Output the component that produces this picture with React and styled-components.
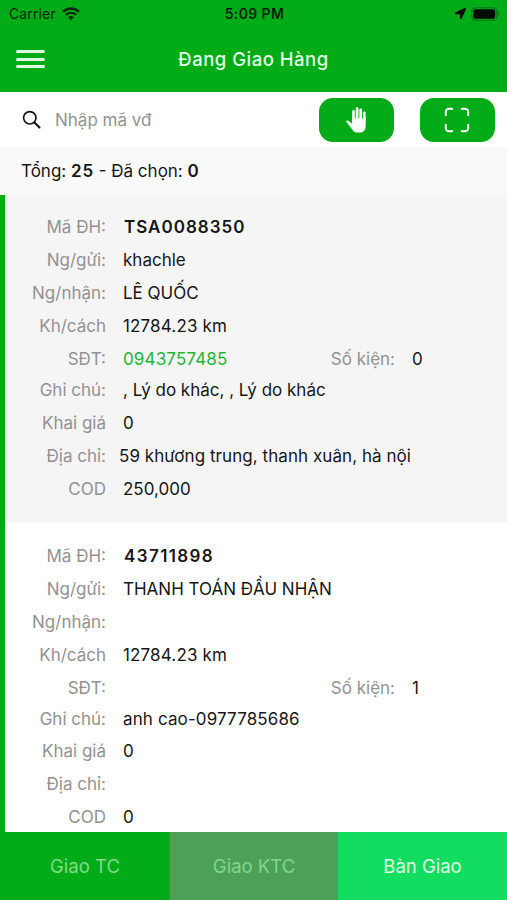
import React from 'react';
import styled, { createGlobalStyle } from 'styled-components';
import { IoScanOutline } from 'react-icons/io5';
import { FaLocationArrow } from 'react-icons/fa';

const green = '#00ab18';

const GlobalStyle = createGlobalStyle`
  * { box-sizing: border-box; }

  body {
    margin: 0;
    background: #fff;
    font-family: Inter, 'Noto Sans', sans-serif;
    color: #161616;
    overflow: hidden;
  }
`;

const Screen = styled.div`
  width: 507px;
  height: 900px;
  display: flex;
  flex-direction: column;
  overflow: hidden;
`;

const StatusBar = styled.div`
  height: 28px;
  flex: none;
  display: grid;
  grid-template-columns: 1fr auto 1fr;
  align-items: center;
  padding: 0 7px 1px 9px;
  background: ${green};
  color: #02260a;
  font-size: 14px;
`;

const StatusSide = styled.div`
  display: flex;
  align-items: center;
  justify-content: ${(p) => (p.$end ? 'flex-end' : 'flex-start')};
  gap: ${(p) => (p.$end ? 5 : 6)}px;
  letter-spacing: 0.1px;
`;

const Clock = styled.span`
  font-weight: 600;
  color: #021d07;
  letter-spacing: 0.4px;
`;

const Header = styled.header`
  height: 64px;
  flex: none;
  display: grid;
  grid-template-columns: 60px 1fr 60px;
  align-items: center;
  padding: 0 0 2px;
  background: ${green};
`;

const MenuButton = styled.button`
  width: 29px;
  height: 18px;
  margin-left: 16px;
  padding: 0;
  border: 0;
  background: none;
  display: flex;
  flex-direction: column;
  justify-content: space-between;

  span {
    width: 100%;
    height: 3px;
    border-radius: 2px;
    background: #dcfadf;
  }
`;

const Title = styled.h1`
  margin: 0;
  text-align: center;
  color: #e4fbe6;
  font-size: 18.5px;
  font-weight: 500;
  letter-spacing: 0.5px;
`;

const SearchBar = styled.div`
  height: 55px;
  flex: none;
  display: flex;
  align-items: center;
  padding: 0 12.5px 0 22px;
  background: #fff;

  input {
    flex: 1;
    min-width: 0;
    margin-left: 13px;
    padding: 0;
    border: 0;
    outline: 0;
    font: 400 17px Inter, 'Noto Sans', sans-serif;
    background: none;
  }

  input::placeholder {
    color: #929292;
    opacity: 1;
  }
`;

const ActionButton = styled.button`
  width: 75px;
  height: 44px;
  margin-left: 26px;
  padding: 0;
  border: 0;
  border-radius: 14px;
  display: flex;
  align-items: center;
  justify-content: center;
  background: ${green};
  color: #fff;
`;

const Summary = styled.div`
  height: 48px;
  flex: none;
  padding-left: 21px;
  line-height: 48px;
  background: #f9f9f9;
  font-size: 17px;

  b {
    font-weight: 600;
    letter-spacing: 0.8px;
  }
`;

const List = styled.main`
  flex: 1;
  min-height: 0;
  overflow: hidden;
  border-left: 5px solid ${green};
`;

const Card = styled.article`
  height: 327px;
  margin-bottom: 1.7px;
  padding: 16.3px 35px 0 0;
  display: flex;
  justify-content: space-between;
  background: ${(p) => (p.$shaded ? '#f5f5f5' : '#fff')};
`;

const Radio = styled.span`
  width: 32px;
  height: 32px;
  flex: none;
  margin-top: 9.7px;
  border: 1.5px solid #d3d3d3;
  border-radius: 50%;
  background: #fff;
`;

const Fields = styled.div`
  flex: 1;
`;

const Row = styled.div`
  height: ${(p) => (p.$short ? 31 : 32.9)}px;
  display: flex;
  line-height: 33px;
  font-size: 17px;
  white-space: nowrap;
`;

const Label = styled.span`
  width: ${(p) => p.$width || 101}px;
  flex: none;
  text-align: right;
  color: #929292;
`;

const Value = styled.span`
  width: 190px;
  padding-left: ${(p) => (p.$tight ? 13 : 17)}px;
  color: ${(p) => (p.$phone ? '#1fb535' : 'inherit')};
  letter-spacing: ${(p) => p.$spacing || 0}px;
`;

const Code = styled(Value)`
  padding-left: 18px;
  font-weight: 600;
`;

const Footer = styled.footer`
  height: 68px;
  flex: none;
  display: grid;
  grid-template-columns: 170px 168px 1fr;
`;

const Tab = styled.button`
  padding: 0;
  border: 0;
  background: ${(p) => p.$bg};
  color: ${(p) => p.$color};
  font: 400 18.5px Inter, 'Noto Sans', sans-serif;
`;

const orders = [
  {
    code: 'TSA0088350',
    codeSpacing: 1,
    sender: 'khachle',
    receiver: 'LÊ QUỐC',
    distance: '12784.23 km',
    phone: '0943757485',
    pieces: 0,
    note: ', Lý do khác, , Lý do khác',
    declared: '0',
    address: '59 khương trung, thanh xuân, hà nội',
    cod: '250,000',
  },
  {
    code: '43711898',
    codeSpacing: 1.4,
    sender: 'THANH TOÁN ĐẦU NHẬN',
    receiver: '',
    distance: '12784.23 km',
    phone: '',
    pieces: 1,
    note: 'anh cao-0977785686',
    noteSpacing: 0.12,
    declared: '0',
    address: '',
    cod: '0',
  },
];

const WifiIcon = () => (
  <svg width="18" height="14" viewBox="0 0 18 14" fill="none" stroke="#02260a">
    <path d="M1 4.8a11.4 11.4 0 0 1 16 0" strokeWidth="2.3" />
    <path d="M3.8 7.9a7.4 7.4 0 0 1 10.4 0" strokeWidth="2.2" />
    <path d="M9 13.3 6.1 10.3a4.2 4.2 0 0 1 5.8 0Z" fill="#02260a" stroke="none" />
  </svg>
);

const BatteryIcon = () => (
  <svg width="29" height="14" viewBox="0 0 29 14">
    <rect x="0.7" y="0.7" width="25" height="12.6" rx="3.6" fill="none" stroke="#05751a" strokeWidth="1.1" />
    <rect x="2.2" y="2.2" width="22" height="9.6" rx="2.2" fill="#010b03" />
    <path d="M27 4.8c1.6.6 1.6 3.8 0 4.4Z" fill="#05751a" />
  </svg>
);

const SearchIcon = () => (
  <svg width="20" height="20" viewBox="0 0 20 20" fill="none" stroke="#161616" strokeLinecap="round">
    <circle cx="7.8" cy="7.8" r="6.2" strokeWidth="1.7" />
    <path d="m12.5 12.5 5 5" strokeWidth="2.1" />
  </svg>
);

const HandIcon = () => (
  <svg width="20" height="26" viewBox="0 0 20 26" fill="none" stroke="#fff" strokeLinecap="round">
    <path d="M7.5 14V4.3M11.1 13V1.7M14.7 13V2.9M18.3 14V5.9" strokeWidth="2.7" />
    <path
      d="M6.2 11.5h13.4v8.3c0 3.2-2.2 5.8-5.4 5.8h-2.6c-2.3 0-3.7-.8-5-2.6L.5 15.1c-.7-1 .5-2 1.8-1.4l3.9 3Z"
      fill="#fff"
      stroke="none"
    />
  </svg>
);

const OrderCard = ({ order, shaded }) => (
  <Card $shaded={shaded}>
    <Fields>
      <Row><Label>Mã ĐH:</Label><Code $spacing={order.codeSpacing}>{order.code}</Code></Row>
      <Row><Label>Ng/gửi:</Label><Value>{order.sender}</Value></Row>
      <Row><Label>Ng/nhận:</Label><Value>{order.receiver}</Value></Row>
      <Row><Label>Kh/cách</Label><Value $spacing={0.15}>{order.distance}</Value></Row>
      <Row $short>
        <Label>SĐT:</Label>
        <Value $phone $spacing={0.15}>{order.phone}</Value>
        <Label $width={99}>Số kiện:</Label>
        <Value>{order.pieces}</Value>
      </Row>
      <Row><Label>Ghi chú:</Label><Value $spacing={order.noteSpacing}>{order.note}</Value></Row>
      <Row><Label>Khai giá</Label><Value>{order.declared}</Value></Row>
      <Row><Label>Địa chỉ:</Label><Value $tight $spacing={0.06}>{order.address}</Value></Row>
      <Row><Label>COD</Label><Value>{order.cod}</Value></Row>
    </Fields>
    <Radio />
  </Card>
);

const App = () => (
  <>
    <GlobalStyle />
    <Screen>
      <StatusBar>
        <StatusSide>Carrier <WifiIcon /></StatusSide>
        <Clock>5:09 PM</Clock>
        <StatusSide $end>
          <FaLocationArrow size={11} color="#010b03" />
          <BatteryIcon />
        </StatusSide>
      </StatusBar>
      <Header>
        <MenuButton aria-label="Menu"><span /><span /><span /></MenuButton>
        <Title>Đang Giao Hàng</Title>
      </Header>
      <SearchBar>
        <SearchIcon />
        <input placeholder="Nhập mã vđ" />
        <ActionButton aria-label="Chọn"><HandIcon /></ActionButton>
        <ActionButton aria-label="Quét"><IoScanOutline size={30} /></ActionButton>
      </SearchBar>
      <Summary>Tổng: <b>25</b> - Đã chọn: <b>0</b></Summary>
      <List>
        {orders.map((order, i) => (
          <OrderCard key={order.code} order={order} shaded={i % 2 === 0} />
        ))}
      </List>
      <Footer>
        <Tab $bg={green} $color="#7fdc88">Giao TC</Tab>
        <Tab $bg="#4ca159" $color="#82d68c">Giao KTC</Tab>
        <Tab $bg="#12dd60" $color="#e0fbe6">Bàn Giao</Tab>
      </Footer>
    </Screen>
  </>
);

export default App;
